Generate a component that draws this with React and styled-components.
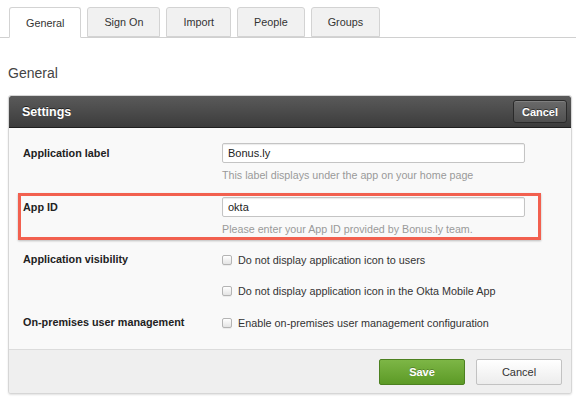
import styled, { createGlobalStyle } from "styled-components";

const GlobalStyle = createGlobalStyle`
  body {
    margin: 0;
    background: #ffffff;
    font-family: "Liberation Sans", Arial, sans-serif;
    color: #333;
  }
`

const tabs = ["General", "Sign On", "Import", "People", "Groups"]

const App = () => {
  return (
    <Page>
      <GlobalStyle />

      {/* tab strip across the top */}
      <TabBar>
        {tabs.map((t, i) => (
          <Tab key={t} $active={i === 0}>{t}</Tab>
        ))}
      </TabBar>

      <Title>General</Title>

      <Panel>
        <PanelHeader>
          <PanelTitle>Settings</PanelTitle>
          <DarkButton>Cancel</DarkButton>
        </PanelHeader>

        <PanelBody>
          <Row>
            <Label>Application label</Label>
            <Field>
              <TextInput defaultValue="Bonus.ly" />
              <Help>This label displays under the app on your home page</Help>
            </Field>
          </Row>

          <Row $highlight>
            <Label>App ID</Label>
            <Field>
              <TextInput defaultValue="okta" />
              <Help>Please enter your App ID provided by Bonus.ly team.</Help>
            </Field>
          </Row>

          <Row>
            <Label $check>Application visibility</Label>
            <Field $check>
              <CheckLine>
                <Box type="checkbox" />
                Do not display application icon to users
              </CheckLine>
              <CheckLine>
                <Box type="checkbox" />
                Do not display application icon in the Okta Mobile App
              </CheckLine>
            </Field>
          </Row>

          <Row>
            <Label $check>On-premises user management</Label>
            <Field $check>
              <CheckLine>
                <Box type="checkbox" />
                Enable on-premises user management configuration
              </CheckLine>
            </Field>
          </Row>
        </PanelBody>

        <PanelFooter>
          <SaveButton>Save</SaveButton>
          <CancelButton>Cancel</CancelButton>
        </PanelFooter>
      </Panel>
    </Page>
  )
}

const Page = styled.div`
  width: 576px;
  height: 401px;
  overflow: hidden;
`

const TabBar = styled.div`
  display: flex;
  gap: 6px;
  padding: 7px 0 0 9px;
  height: 30px;
  border-bottom: 1px solid #d0d0d0;
`

const Tab = styled.div`
  box-sizing: border-box;
  padding: 0 16px;
  display: flex;
  align-items: center;
  font-size: 10.8px;
  color: #333;
  border: 1px solid #d3d3d3;
  border-radius: 3px 3px 0 0;
  background: ${p => (p.$active ? "#ffffff" : "#f1f1f1")};
  border-bottom-color: ${p => (p.$active ? "#ffffff" : "#d3d3d3")};
  height: ${p => (p.$active ? "31px" : "30px")};
`

const Title = styled.h2`
  margin: 27px 0 13px 8px;
  font-size: 14px;
  line-height: 17px;
  font-weight: normal;
  color: #444;
`

const Panel = styled.div`
  margin-left: 8px;
  width: 564px;
  box-sizing: border-box;
  border: 1px solid #d6d6d6;
  border-radius: 3px;
  background: #f9f9f9;
  box-shadow: 0 1px 2px rgba(0, 0, 0, 0.12);
  overflow: hidden;
`

const PanelHeader = styled.div`
  height: 31px;
  display: flex;
  align-items: center;
  justify-content: space-between;
  padding: 0 4px 0 13px;
  background: linear-gradient(#5a5a5a, #3c3c3c);
  border-bottom: 1px solid #1f1f1f;
  border-radius: 2px 2px 0 0;
`

const PanelTitle = styled.span`
  color: #fff;
  font-size: 12.5px;
  font-weight: bold;
  text-shadow: 0 -1px 0 rgba(0, 0, 0, 0.6);
`

const DarkButton = styled.button`
  width: 54px;
  height: 23px;
  font-family: inherit;
  font-size: 11px;
  font-weight: bold;
  color: #fff;
  background: linear-gradient(#6a6a6a, #505050);
  border: 1px solid #2a2a2a;
  border-radius: 3px;
  box-shadow: inset 0 1px 0 rgba(255, 255, 255, 0.15);
  text-shadow: 0 -1px 0 rgba(0, 0, 0, 0.5);
  padding: 0;
`

const PanelBody = styled.div`
  display: flex;
  flex-direction: column;
  gap: 7px;
  padding: 11px 0 14px;
`

const Row = styled.div`
  display: grid;
  grid-template-columns: 199px 303px;
  align-items: start;
  margin-left: 9px;
  width: 523px;
  box-sizing: border-box;
  padding: 1px 0 1px 2px;
  border: 3px solid ${p => (p.$highlight ? "#f2604f" : "transparent")};
  box-shadow: ${p => (p.$highlight ? "0 1px 2px rgba(0, 0, 0, 0.25)" : "none")};
`

const Label = styled.div`
  font-size: 10.8px;
  font-weight: bold;
  color: #222;
  line-height: ${p => (p.$check ? "17px" : "20px")};
`

const Field = styled.div`
  display: flex;
  flex-direction: column;
  gap: ${p => (p.$check ? "14px" : "0")};
`

const TextInput = styled.input`
  width: 303px;
  height: 20px;
  box-sizing: border-box;
  margin: 0;
  padding: 0 5px;
  font-family: inherit;
  font-size: 11px;
  color: #222;
  background: #fff;
  border: 1px solid #c4c4c4;
  border-radius: 2px;
  box-shadow: inset 0 1px 1px rgba(0, 0, 0, 0.08);
  outline: none;
`

const Help = styled.div`
  margin-top: 5px;
  font-size: 10.7px;
  line-height: 14px;
  color: #999;
`

const CheckLine = styled.label`
  display: flex;
  align-items: center;
  gap: 6px;
  height: 17px;
  font-size: 10.8px;
  color: #333;
`

const Box = styled.input`
  appearance: none;
  margin: 0;
  width: 10px;
  height: 10px;
  border: 1px solid #b4b4b4;
  border-radius: 2px;
  background: linear-gradient(#ffffff, #e4e4e4);
  box-shadow: 0 1px 0 rgba(0, 0, 0, 0.05);
`

const PanelFooter = styled.div`
  display: flex;
  justify-content: flex-end;
  gap: 11px;
  padding: 9px 9px 8px;
  background: #efefef;
  border-top: 1px solid #dcdcdc;
`

const SaveButton = styled.button`
  width: 86px;
  height: 26px;
  padding: 0;
  font-family: inherit;
  font-size: 11px;
  font-weight: bold;
  color: #fff;
  background: linear-gradient(#7db646, #5c9a26);
  border: 1px solid #4c8020;
  border-radius: 2px;
  text-shadow: 0 -1px 0 rgba(0, 0, 0, 0.25);
`

const CancelButton = styled.button`
  width: 86px;
  height: 26px;
  padding: 0;
  font-family: inherit;
  font-size: 11px;
  color: #333;
  background: linear-gradient(#ffffff, #ececec);
  border: 1px solid #c2c2c2;
  border-radius: 2px;
`

export default App
